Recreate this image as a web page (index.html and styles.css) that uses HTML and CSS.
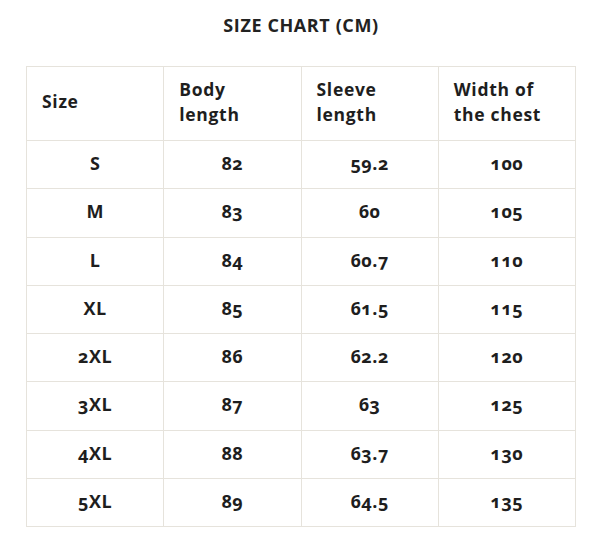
FILE: index.html
```html
<!DOCTYPE html>
<html>
<head>
<meta charset="utf-8">
<link rel="stylesheet" href="styles.css">
</head>
<body>
<div class="page">
  <h1 class="title">SIZE CHART (CM)</h1>
  <table class="chart">
    <thead>
      <tr>
        <th>Size</th>
        <th>Body<br>length</th>
        <th>Sleeve<br>length</th>
        <th>Width of<br>the chest</th>
      </tr>
    </thead>
    <tbody>
      <tr><td>S</td><td>82</td><td>59.2</td><td>100</td></tr>
      <tr><td>M</td><td>83</td><td>60</td><td>105</td></tr>
      <tr><td>L</td><td>84</td><td>60.7</td><td>110</td></tr>
      <tr><td>XL</td><td>85</td><td>61.5</td><td>115</td></tr>
      <tr><td>2XL</td><td>86</td><td>62.2</td><td>120</td></tr>
      <tr><td>3XL</td><td>87</td><td>63</td><td>125</td></tr>
      <tr><td>4XL</td><td>88</td><td>63.7</td><td>130</td></tr>
      <tr><td>5XL</td><td>89</td><td>64.5</td><td>135</td></tr>
    </tbody>
  </table>
</div>
</body>
</html>
```
FILE: styles.css
```css
html, body {
  margin: 0;
  padding: 0;
  background: #fff;
}
body {
  font-family: "Open Sans", "DejaVu Sans", sans-serif;
  color: #1e1e1e;
}
.page {
  padding: 10px 22px 0 26px;
}
.title {
  margin: 0 0 26px;
  text-align: center;
  font-size: 18px;
  font-weight: 700;
  line-height: 30px;
  letter-spacing: 0.6px;
  color: #222;
}
.chart {
  width: 550px;
  border-collapse: collapse;
  table-layout: fixed;
}
.chart th, .chart td {
  border: 1px solid #e6e3dc;
  font-weight: 700;
}
.chart th {
  height: 69px;
  padding: 0 10px 4px 15px;
  text-align: left;
  font-size: 17.5px;
  line-height: 25px;
  letter-spacing: 0.7px;
}
.chart td {
  height: 44.25px;
  padding: 0 0 3px;
  text-align: center;
  font-size: 18px;
  letter-spacing: 0.5px;
  font-variant-numeric: oldstyle-nums;
  font-feature-settings: "onum" 1;
}
```
